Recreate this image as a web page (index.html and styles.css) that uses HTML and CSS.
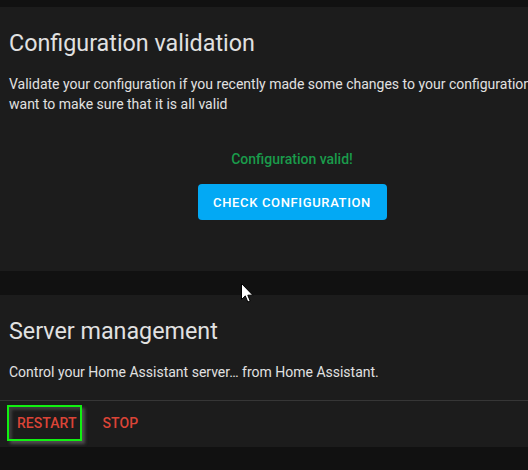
FILE: index.html
```html
<!DOCTYPE html>
<html lang="en">
<head>
<meta charset="utf-8">
<title>Server controls</title>
<link rel="stylesheet" href="styles.css">
</head>
<body>
<div class="page">
  <section class="card card-config">
    <h1 class="card-header">Configuration validation</h1>
    <div class="card-content">
      <p class="desc">Validate your configuration if you recently made some changes to your configuration and want to make sure that it is all valid</p>
      <div class="validate">
        <div class="result">Configuration valid!</div>
        <button class="btn-raised">Check configuration</button>
      </div>
    </div>
  </section>
  <section class="card card-server">
    <h1 class="card-header">Server management</h1>
    <div class="card-content">
      <p class="desc">Control your Home Assistant server… from Home Assistant.</p>
    </div>
    <div class="card-actions">
      <button class="btn-text focused">Restart</button>
      <button class="btn-text">Stop</button>
    </div>
  </section>
</div>
<svg class="cursor" width="13" height="21" viewBox="0 0 13 21" aria-hidden="true">
  <path d="M0.5 0.5 L0.5 16.5 L4.3 12.9 L6.8 19 L9.2 18 L6.8 12.2 L11.8 12.2 Z" fill="#ffffff" stroke="#000000" stroke-width="1" stroke-linejoin="miter"/>
</svg>
</body>
</html>
```
FILE: styles.css
```css
html, body {
  margin: 0;
  padding: 0;
}
body {
  background: #111111;
  overflow: hidden;
  width: 528px;
  height: 470px;
  font-family: Roboto, "Liberation Sans", sans-serif;
  color: #e1e1e1;
}
.page {
  width: 598px;
  margin-left: -7px;
  padding-top: 7px;
  display: flex;
  flex-direction: column;
  gap: 24px;
}
.card {
  background: #1c1c1c;
}
.card-header {
  margin: 0;
  padding: 20px 16px 0;
  font-size: 23.3px;
  line-height: 32px;
  font-weight: 400;
  color: #e1e1e1;
}
.card-content {
  padding: 15px 16px 0;
}
.desc {
  margin: 0;
  font-size: 14px;
  line-height: 20px;
  width: 555px;
}
.card-config {
  height: 264px;
}
.validate {
  display: flex;
  flex-direction: column;
  align-items: center;
  padding-top: 35px;
  gap: 15px;
}
.result {
  font-size: 14px;
  line-height: 20px;
  font-weight: 500;
  color: #1a9b4b;
}
.btn-raised {
  width: 189px;
  height: 36px;
  padding: 0;
  border: none;
  border-radius: 4px;
  background: #03a9f4;
  color: #ffffff;
  font-family: inherit;
  font-size: 13px;
  font-weight: 500;
  letter-spacing: 0.65px;
  text-transform: uppercase;
}
.card-server .card-content {
  padding-bottom: 18px;
}
.card-actions {
  border-top: 1px solid #363636;
  padding: 4px 14px 6px;
  display: flex;
  gap: 11px;
}
.btn-text {
  height: 36px;
  padding: 0 3px 0 8px;
  border: 2px solid transparent;
  background: transparent;
  color: #db4437;
  font-family: inherit;
  font-size: 14px;
  font-weight: 500;
  letter-spacing: 0.05px;
  text-transform: uppercase;
}
.btn-text.focused {
  border-color: #11f011;
  box-shadow: 3px 3px 3px rgba(120, 120, 120, 0.55), inset 3px 3px 3px rgba(120, 120, 120, 0.35);
}
.cursor {
  position: absolute;
  left: 241px;
  top: 283px;
}
```
